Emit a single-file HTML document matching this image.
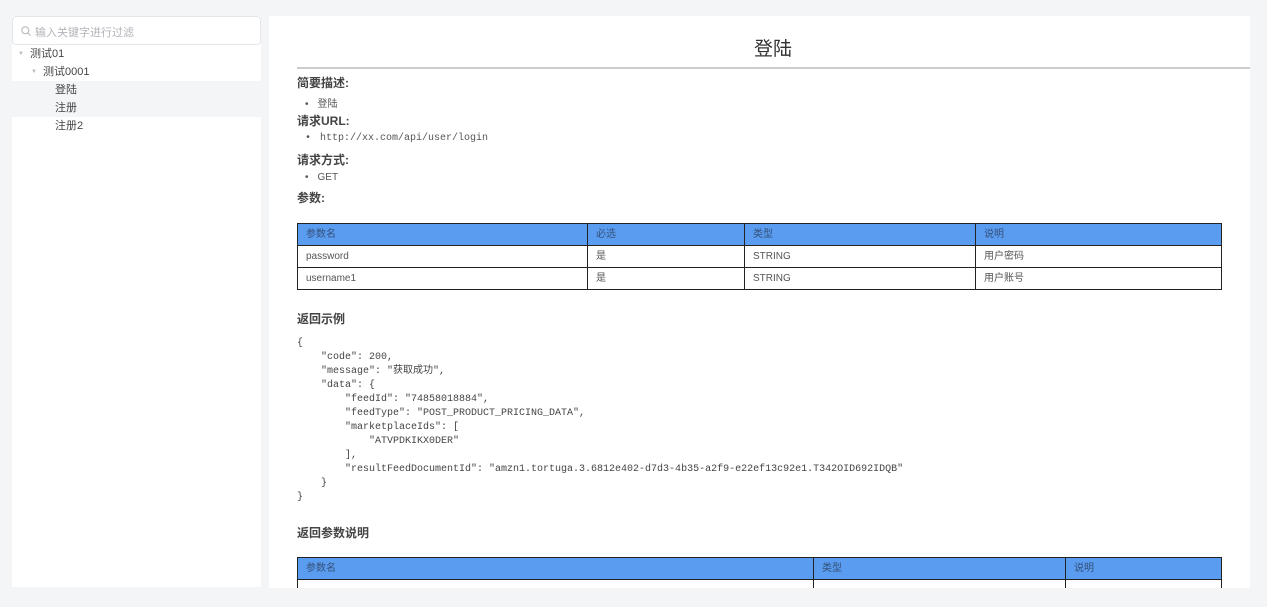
<!DOCTYPE html>
<html><head><meta charset="utf-8"><style>
*{margin:0;padding:0;box-sizing:border-box}
body{width:1267px;height:607px;background:#f4f5f7;font-family:"Liberation Sans","Noto Sans CJK SC",sans-serif;color:#333;position:relative;overflow:hidden}
.side{position:absolute;left:12px;top:16px;width:249px;height:571px;background:#fff}
.search{height:29px;border:1px solid #e4e6ea;border-radius:4px;font-size:11px;color:#b0b3b8;padding:7px 0 0 22px;position:relative;background:#fff}
.search svg{position:absolute;left:8px;top:9px}
.node{height:18px;font-size:11px;line-height:18px;color:#444;position:relative}
.node .ar{position:absolute;font-size:6px;color:#bbb}
.main{position:absolute;left:269px;top:16px;width:981px;height:572px;background:#fff;overflow:hidden}
h1{position:absolute;left:0;width:1008px;text-align:center;top:18px;font-size:19px;font-weight:normal;color:#333}
.hr{position:absolute;left:28px;right:0;top:51px;height:2px;background:#ccc}
.h{position:absolute;left:28px;font-size:12px;font-weight:bold;color:#444}
.li{position:absolute;left:36px;font-size:10px;color:#555}
.li:before{content:"•";margin-right:9px}
.mono{font-family:"Liberation Mono","Noto Sans CJK SC",monospace}
table{position:absolute;left:28px;border-collapse:collapse;font-size:10px;color:#555}
td,th{border:1px solid #222;height:22px;line-height:12px;padding:0 8px;text-align:left;font-weight:normal;vertical-align:middle}
th{background:#5a9cf0;color:#34507a}
pre{position:absolute;left:28px;top:321px;font-family:"Liberation Mono","Noto Sans CJK SC",monospace;font-size:10px;line-height:14px;color:#444}
</style></head><body>
<div class="side">
<div class="search"><svg width="10" height="10" viewBox="0 0 10 10"><circle cx="4.3" cy="4.3" r="3.5" fill="none" stroke="#b0b3b8" stroke-width="1"/><path d="M7 7l2.5 2.5" stroke="#b0b3b8"/></svg>输入关键字进行过滤</div>
<div class="node" style="padding-left:18px"><span class="ar" style="left:6px">▼</span>测试01</div>
<div class="node" style="padding-left:31px"><span class="ar" style="left:19px">▼</span>测试0001</div>
<div class="node" style="padding-left:43px;background:#f4f5f7">登陆</div>
<div class="node" style="padding-left:43px;background:#f4f5f7">注册</div>
<div class="node" style="padding-left:43px">注册2</div>
</div>
<div class="main">
<h1>登陆</h1>
<div class="hr"></div>
<div class="h" style="top:58px">简要描述:</div>
<div class="li" style="top:79px">登陆</div>
<div class="h" style="top:96px">请求URL:</div>
<div class="li mono" style="top:117px">http://xx.com/api/user/login</div>
<div class="h" style="top:135px">请求方式:</div>
<div class="li" style="top:156px">GET</div>
<div class="h" style="top:173px">参数:</div>
<table style="top:207px;width:925px">
<tr><th style="width:290px">参数名</th><th style="width:157px">必选</th><th style="width:231px">类型</th><th>说明</th></tr>
<tr><td>password</td><td>是</td><td>STRING</td><td>用户密码</td></tr>
<tr><td>username1</td><td>是</td><td>STRING</td><td>用户账号</td></tr>
</table>
<div class="h" style="top:294px">返回示例</div>
<pre>{
    "code": 200,
    "message": "获取成功",
    "data": {
        "feedId": "74858018884",
        "feedType": "POST_PRODUCT_PRICING_DATA",
        "marketplaceIds": [
            "ATVPDKIKX0DER"
        ],
        "resultFeedDocumentId": "amzn1.tortuga.3.6812e402-d7d3-4b35-a2f9-e22ef13c92e1.T342OID692IDQB"
    }
}</pre>
<div class="h" style="top:508px">返回参数说明</div>
<table style="top:541px;width:925px">
<tr><th style="width:516px">参数名</th><th style="width:252px">类型</th><th>说明</th></tr>
<tr><td>&nbsp;</td><td></td><td></td></tr>
</table>
</div>
</body></html>
